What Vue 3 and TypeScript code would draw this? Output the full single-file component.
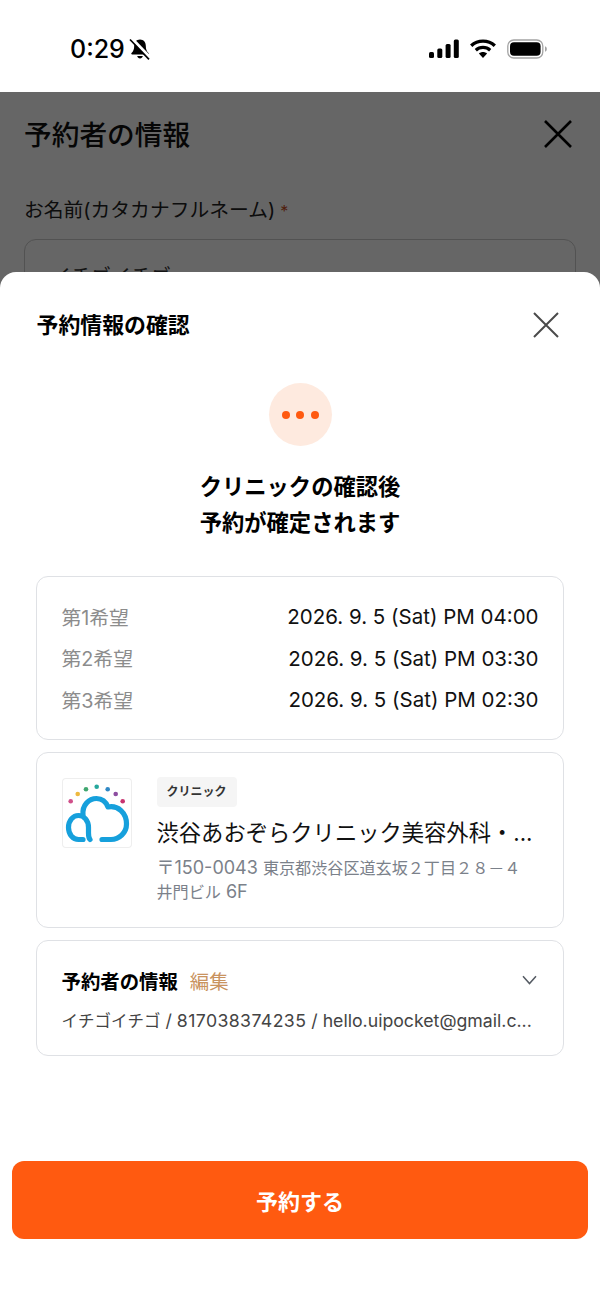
<script setup lang="ts">
const wishes = [
  { label: "第1希望", value: "2026. 9. 5 (Sat) PM 04:00" },
  { label: "第2希望", value: "2026. 9. 5 (Sat) PM 03:30" },
  { label: "第3希望", value: "2026. 9. 5 (Sat) PM 02:30" },
];
</script>

<template>
  <div class="page">
    <header class="status">
      <div class="status-left">
        <span class="time">0:29</span>
        <svg class="bell" viewBox="0 0 22 22" width="22" height="22">
          <path d="M11 1.500c-3.700 0-5.800 2.800-5.800 6.200 0 3.600-.9 5.500-2.700 7.400-.5.600-.2 1.500.7 1.500h15.600c.9 0 1.200-.9.7-1.500-1.800-1.900-2.700-3.800-2.700-7.400 0-3.400-2.100-6.200-5.800-6.200z" fill="#000" />
          <path d="M8.200 18c.3 1.500 1.400 2.500 2.800 2.500s2.500-1 2.800-2.500z" fill="#000" />
          <path d="M3 .8 21.500 20" stroke="#fff" stroke-width="3.200" />
          <path d="M1 1.500 20 21.300" stroke="#000" stroke-width="1.700" />
        </svg>
      </div>
      <div class="status-right">
        <svg viewBox="0 0 30 20" width="30" height="20">
          <rect x="0" y="13" width="5" height="6" rx="1.500" />
          <rect x="8.300" y="9.500" width="5" height="9.500" rx="1.500" />
          <rect x="16.600" y="5" width="5" height="14" rx="1.500" />
          <rect x="24.800" y="0.500" width="5" height="18.500" rx="1.500" />
        </svg>
        <svg viewBox="0 0 26 20" width="26" height="20">
          <path d="M1.200 6.700C7.800.6 18.200.6 24.800 6.700" fill="none" stroke="#000" stroke-width="3.400" />
          <path d="M5.800 11.200c4.100-3.700 10.300-3.700 14.400 0" fill="none" stroke="#000" stroke-width="3.200" />
          <path d="M8.900 14.600c2.400-2 5.800-2 8.200 0L13 19z" fill="#000" />
        </svg>
        <svg viewBox="0 0 40 20" width="40" height="20">
          <rect x="0.800" y="1" width="35" height="18" rx="6" fill="none" stroke="#a3a3a3" stroke-width="1.300" />
          <rect x="3" y="3.200" width="30.600" height="13.600" rx="4" fill="#000" />
          <path d="M38 7.200c1.300.4 1.800 1.500 1.800 2.800s-.5 2.400-1.800 2.800z" fill="#a3a3a3" />
        </svg>
      </div>
    </header>

    <section class="behind">
      <div class="behind-head">
        <h2>予約者の情報</h2>
        <svg viewBox="0 0 28 28" width="28" height="28">
          <path d="M1 1 27 27M27 1 1 27" stroke="#000" stroke-width="2.600" fill="none" />
        </svg>
      </div>
      <label class="behind-label">お名前(カタカナフルネーム)<em>*</em></label>
      <div class="behind-input">イチゴイチゴ</div>
    </section>

    <div class="overlay"></div>

    <section class="sheet">
      <div class="sheet-head">
        <h1>予約情報の確認</h1>
        <svg viewBox="0 0 26 26" width="26" height="26">
          <path d="M1 1 25 25M25 1 1 25" stroke="#4a4a4a" stroke-width="2" fill="none" />
        </svg>
      </div>

      <div class="pending">
        <span></span><span></span><span></span>
      </div>
      <p class="message">クリニックの確認後<br />予約が確定されます</p>

      <div class="cards">
        <div class="card wishes">
          <div v-for="w in wishes" :key="w.label" class="wish">
            <span class="wish-label">{{ w.label }}</span>
            <span class="wish-value">{{ w.value }}</span>
          </div>
        </div>

        <div class="card clinic">
          <div class="logo">
            <svg viewBox="0 0 70 70" width="70" height="70">
              <circle cx="8.700" cy="23.300" r="2.300" fill="#d0508a" />
              <circle cx="15.700" cy="16" r="2.300" fill="#eeb93f" />
              <circle cx="24" cy="11.300" r="2.300" fill="#3fa66f" />
              <circle cx="34.700" cy="8.700" r="2.300" fill="#25a79c" />
              <circle cx="45.700" cy="11.300" r="2.300" fill="#2f88c5" />
              <circle cx="53.700" cy="16" r="2.300" fill="#8d4da0" />
              <circle cx="60.700" cy="23.300" r="2.300" fill="#c8336f" />
              <path d="M28 61.500C26.800 60 26.500 58 26.500 55V49.500C26.500 42.500 22 37.500 16.500 37.500S6.500 42.500 6.500 49.500 11 61.500 16.500 61.500H21" fill="none" stroke="#16a0dc" stroke-width="5.200" stroke-linecap="round" />
              <path d="M21 37C20 27 27 20.500 34.500 20.500 40 20.500 44 24 46 29 56 27 64.500 35 64.500 46 64.500 55 57 61.500 49 61.500H40" fill="none" stroke="#16a0dc" stroke-width="5.200" stroke-linecap="round" stroke-linejoin="round" />
            </svg>
          </div>
          <div class="clinic-body">
            <span class="tag">クリニック</span>
            <div class="clinic-name">渋谷あおぞらクリニック美容外科・...</div>
            <p class="address">〒150-0043 <span class="cjk">東京都渋谷区道玄坂２丁目２８－４</span><br /><span class="cjk">井門ビル</span> 6F</p>
          </div>
        </div>

        <div class="card booker">
          <div class="booker-head">
            <strong>予約者の情報</strong>
            <span class="edit">編集</span>
            <svg viewBox="0 0 15 10" width="15" height="10">
              <path d="M1 1.200 7.500 8.500 14 1.200" fill="none" stroke="#555b63" stroke-width="1.500" />
            </svg>
          </div>
          <div class="booker-line"><span class="cjk">イチゴイチゴ</span> / <span class="phone">817038374235</span> / hello.uipocket@gmail.c...</div>
        </div>
      </div>

      <button class="submit">予約する</button>
    </section>
  </div>
</template>

<style>
body {
  background: #fff;
}
</style>

<style scoped>
.page {
  position: relative;
  width: 600px;
  height: 1304px;
  overflow: hidden;
  background: #fff;
  font-family: Inter, "Noto Sans CJK JP", sans-serif;
  color: #000;
}

.status {
  height: 92px;
  box-sizing: border-box;
  padding: 32px 53px 0 70px;
  display: flex;
  justify-content: space-between;
  align-items: flex-start;
}

.status-left {
  display: flex;
  align-items: center;
  gap: 4px;
}

.time {
  font-size: 25px;
  line-height: 34px;
  font-weight: 500;
}

.status-right {
  display: flex;
  align-items: center;
  gap: 11px;
  height: 34px;
}

.behind {
  padding: 0 24px;
}

.behind-head {
  display: flex;
  justify-content: space-between;
  align-items: center;
  height: 84px;
  padding-right: 4px;
}

.behind-head h2 {
  margin: -3px 0 0;
  font-size: 27.700px;
  font-weight: 500;
  color: #111;
}

.behind-label {
  display: block;
  margin-top: 20px;
  font-size: 19.800px;
  line-height: 28px;
  color: #222;
}

.behind-label em {
  margin-left: 5px;
  color: #c9501f;
  font-size: 16px;
  font-style: normal;
}

.behind-input {
  margin-top: 14px;
  height: 72px;
  padding: 21px 26px;
  box-sizing: border-box;
  border: 1.500px solid #ccc;
  border-radius: 12px;
  font-size: 20px;
  color: #333;
}

.overlay {
  position: absolute;
  inset: 92px 0 0;
  background: rgba(0, 0, 0, 0.6);
}

.sheet {
  position: absolute;
  left: 0;
  right: 0;
  top: 272px;
  bottom: 0;
  background: #fff;
  border-radius: 16px 16px 0 0;
}

.sheet-head {
  height: 106px;
  box-sizing: border-box;
  padding: 0 41px 0 36.500px;
  display: flex;
  justify-content: space-between;
  align-items: center;
}

.sheet-head h1 {
  margin: -3px 0 0;
  font-size: 21.900px;
  font-weight: 700;
}

.pending {
  width: 63px;
  height: 63px;
  margin: 5px auto 0;
  border-radius: 50%;
  background: #feeadf;
  display: flex;
  justify-content: center;
  align-items: center;
  gap: 6.500px;
}

.pending span {
  width: 8px;
  height: 8px;
  border-radius: 50%;
  background: #ff5a10;
}

.message {
  margin: 23px 0 0;
  text-align: center;
  font-size: 22.300px;
  line-height: 36px;
  font-weight: 700;
}

.cards {
  margin: 35px 36px 0;
  display: flex;
  flex-direction: column;
  gap: 12px;
}

.card {
  box-sizing: border-box;
  border: 1.500px solid #dfe1e5;
  border-radius: 12px;
  padding: 0 24.500px;
}

.wishes {
  height: 164px;
  display: flex;
  flex-direction: column;
  justify-content: center;
  gap: 13.500px;
}

.wish {
  display: flex;
  justify-content: space-between;
  align-items: center;
  height: 28px;
  font-size: 20.500px;
}

.wish-label {
  font-size: 19.800px;
  margin-top: -1px;
  color: #8c8c8c;
}

.wish-value {
  color: #111;
}

.clinic {
  height: 176px;
  padding-top: 23.500px;
  display: flex;
  gap: 25px;
}

.logo {
  width: 70px;
  height: 70px;
  margin-top: 1px;
  flex: none;
  box-sizing: border-box;
  border-radius: 4px;
  box-shadow: inset 0 0 0 1px #eeeeee;
  display: flex;
  align-items: center;
  justify-content: center;
}

.clinic-body {
  min-width: 0;
  flex: 1;
}

.tag {
  display: block;
  width: 80px;
  height: 30px;
  line-height: 30px;
  text-align: center;
  border-radius: 4px;
  background: #f5f5f5;
  font-size: 12px;
  font-weight: 700;
  color: #333;
}

.clinic-name {
  margin-top: 9px;
  font-size: 22.300px;
  line-height: 34px;
  color: #111;
  white-space: nowrap;
}

.address {
  margin: 6px 0 0;
  font-size: 18px;
  line-height: 24px;
  color: #7b818a;
  white-space: nowrap;
}

.cjk {
  font-family: "Noto Sans CJK JP", sans-serif;
  font-size: 16.100px;
  line-height: 1;
}

.booker {
  height: 116px;
  padding-top: 24px;
}

.booker-head {
  display: flex;
  align-items: center;
  height: 30px;
  font-size: 19.400px;
}

.booker-head strong {
  font-weight: 700;
}

.edit {
  margin-left: 12px;
  color: #c9935f;
}

.booker-head svg {
  margin-left: auto;
  margin-right: 2px;
}

.booker-line {
  margin-top: 13px;
  font-size: 17.700px;
  line-height: 26px;
  color: #444;
  white-space: nowrap;
}

.booker-line .cjk {
  font-size: 16.500px;
}

.phone {
  letter-spacing: 0.4px;
}

.submit {
  display: block;
  width: 576px;
  height: 78px;
  margin: 105px auto 0;
  border: none;
  border-radius: 12px;
  background: #ff5a10;
  color: #fff;
  font: 700 22px Inter, "Noto Sans CJK JP", sans-serif;
}
</style>
